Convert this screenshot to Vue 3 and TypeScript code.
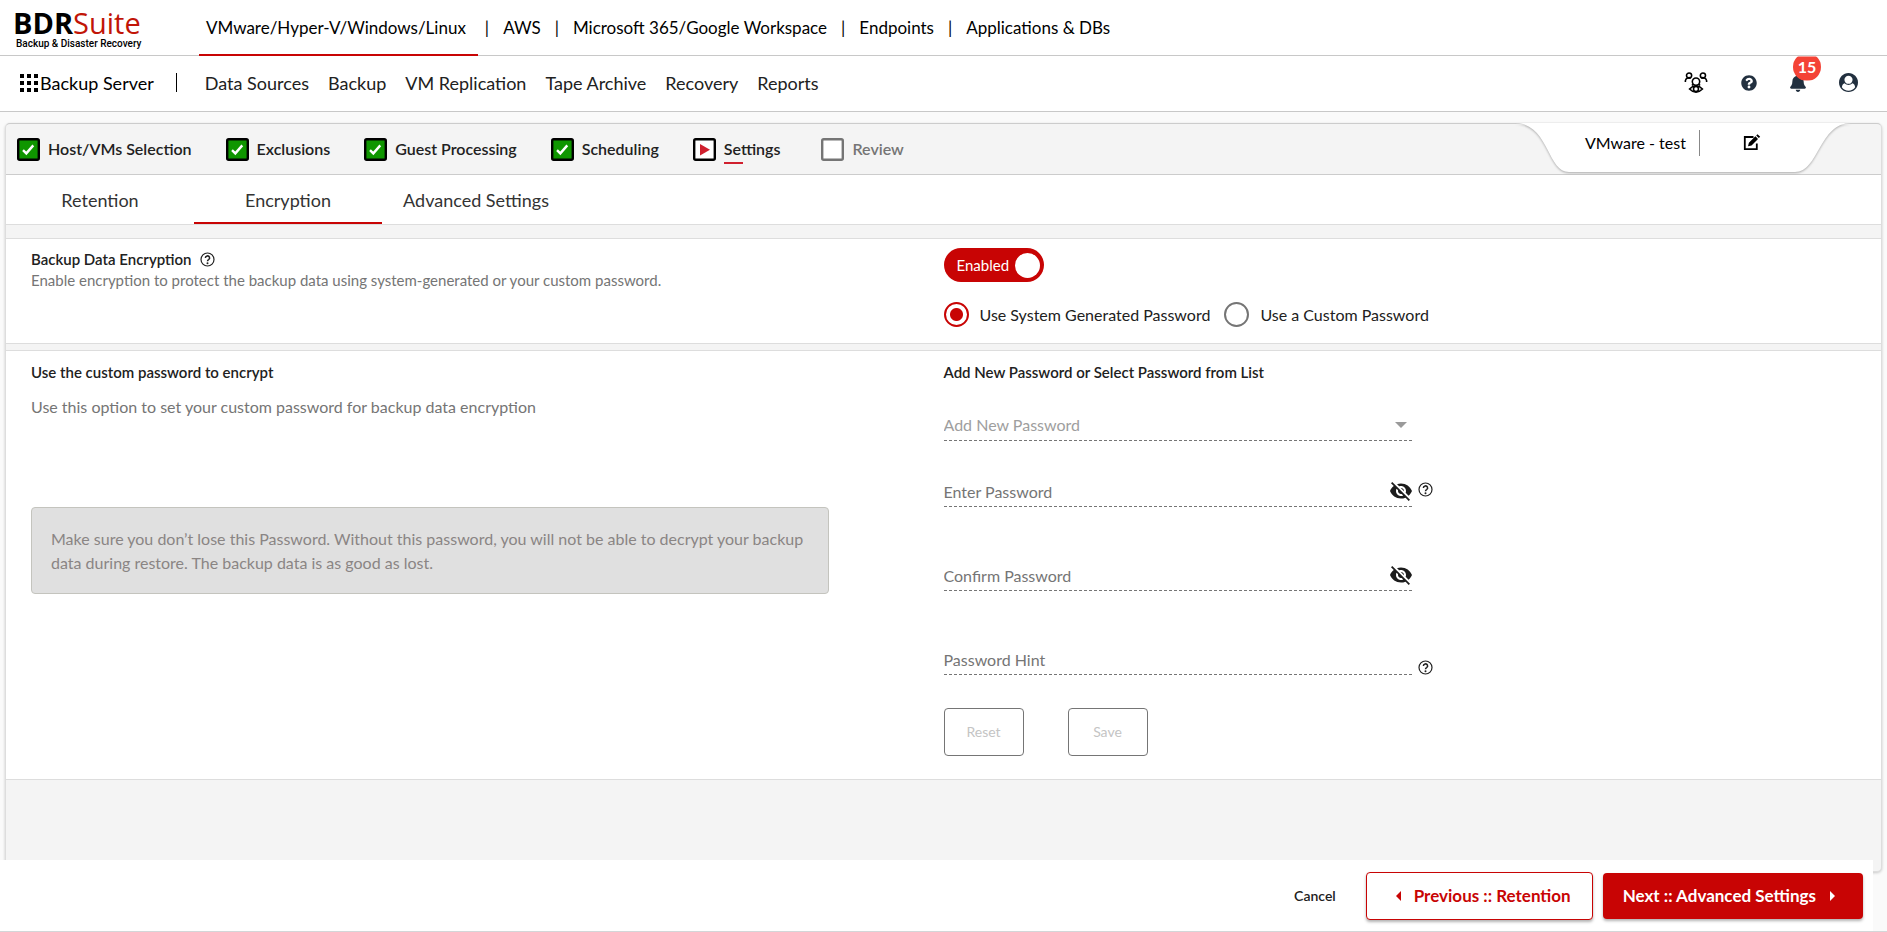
<script setup lang="ts">
import { ref } from 'vue'

interface Step {
  label: string
  state: 'done' | 'current' | 'todo'
}

const products: string[] = [
  'VMware/Hyper-V/Windows/Linux',
  'AWS',
  'Microsoft 365/Google Workspace',
  'Endpoints',
  'Applications & DBs',
]
const menu: string[] = ['Data Sources', 'Backup', 'VM Replication', 'Tape Archive', 'Recovery', 'Reports']
const steps: Step[] = [
  { label: 'Host/VMs Selection', state: 'done' },
  { label: 'Exclusions', state: 'done' },
  { label: 'Guest Processing', state: 'done' },
  { label: 'Scheduling', state: 'done' },
  { label: 'Settings', state: 'current' },
  { label: 'Review', state: 'todo' },
]
const tabs: string[] = ['Retention', 'Encryption', 'Advanced Settings']
const activeTab = ref('Encryption')
const enabled = ref(true)
const source = ref<'system' | 'custom'>('system')
</script>

<template>
  <div class="page">
    <header class="products">
      <a class="logo" href="#">
        <span class="logo-name">BDR<span class="logo-suite">Suite</span></span>
        <span class="logo-tag">Backup &amp; Disaster Recovery</span>
      </a>
      <nav class="product-nav" aria-label="Products">
        <template v-for="(product, i) in products" :key="product">
          <span v-if="i > 0" class="bar">|</span>
          <a href="#" class="product" :class="{ active: i === 0 }">{{ product }}</a>
        </template>
      </nav>
    </header>

    <div class="menubar">
      <a class="server" href="#">
        <svg width="18" height="18" viewBox="0 0 18 18" aria-hidden="true">
          <path d="M0 0h4v4H0zM7 0h4v4H7zM14 0h4v4h-4zM0 7h4v4H0zM7 7h4v4H7zM14 7h4v4h-4zM0 14h4v4H0zM7 14h4v4H7zM14 14h4v4h-4z" />
        </svg>
        Backup Server
      </a>
      <span class="divider"></span>
      <nav class="menu" aria-label="Main">
        <a v-for="item in menu" :key="item" href="#">{{ item }}</a>
      </nav>
      <div class="tools">
        <button type="button" class="tool" aria-label="Community">
          <svg width="24" height="24" viewBox="0 0 26 24" fill="none" stroke="#000" stroke-width="1.7">
            <circle cx="5.500" cy="4" r="2.800" />
            <circle cx="20.500" cy="4" r="2.800" />
            <path d="M1.500 11V9.500a4 4 0 0 1 6-2.700M24.500 11V9.500a4 4 0 0 0-6-2.700" />
            <circle cx="13" cy="10.500" r="4" />
            <path d="M8.500 14.500 10 13.500M17.500 14.500 16 13.500" />
            <path d="M6 18.500q7-7 14 0q-7 7-14 0z" />
            <circle cx="13" cy="18.500" r="2.700" />
          </svg>
        </button>
        <button type="button" class="tool" aria-label="Help">
          <svg width="16" height="16" viewBox="0 0 512 512" fill="#22303f">
            <path d="M504 256c0 137-111 248-248 248S8 393 8 256 119 8 256 8s248 111 248 248zM262.700 90c-54.500 0-89.300 23-116.500 63.800-3.500 5.300-2.400 12.400 2.700 16.300l34.700 26.300c5.200 3.900 12.600 3 16.700-2.100 17.900-22.700 30.100-35.800 57.300-35.800 20.400 0 45.700 13.100 45.700 33 0 15-12.400 22.700-32.500 34C247.100 238.500 216 255 216 296v4c0 6.600 5.400 12 12 12h56c6.600 0 12-5.400 12-12v-1.300c0-28.400 83.200-29.600 83.200-106.700 0-58-60.200-102-116.500-102zM256 338c-25.400 0-46 20.600-46 46s20.600 46 46 46 46-20.600 46-46-20.600-46-46-46z" />
          </svg>
        </button>
        <button type="button" class="tool" aria-label="Notifications, 15 new">
          <svg width="16" height="18" viewBox="0 0 448 512" fill="#22303f">
            <path d="M224 512c35.300 0 63.900-28.700 63.900-64H160.100c0 35.300 28.600 64 63.900 64zm215.400-149.700c-19.300-20.800-55.500-52-55.500-154.300 0-77.700-54.500-139.900-127.900-155.200V32c0-17.700-14.300-32-32-32s-32 14.300-32 32v20.800C118.600 68.100 64.100 130.300 64.100 208c0 102.300-36.200 133.500-55.500 154.300-6 6.400-8.700 14.100-8.600 21.700.1 16.400 13 32 32.100 32h383.800c19.100 0 32-15.600 32.100-32 .1-7.600-2.600-15.300-8.600-21.700z" />
          </svg>
          <span class="badge">15</span>
        </button>
        <button type="button" class="tool" aria-label="Account">
          <svg width="19" height="19" viewBox="0 0 1792 1792" fill="#22303f">
            <path d="M1523 1339q-22-155-87.500-257.500t-184.500-118.500q-67 74-159.500 115.500t-195.500 41.500-195.500-41.500-159.500-115.500q-119 16-184.500 118.500t-87.500 257.500q106 150 271 237.500t356 87.500 356-87.500 271-237.500zM1280 640q0-159-112.500-271.500t-271.500-112.500-271.500 112.500-112.500 271.500 112.500 271.500 271.500 112.500 271.500-112.500 112.500-271.500zM1792 896q0 182-71 347.500t-190.500 286-285.500 191.500-349 71q-182 0-348-71t-286-191-191-286-71-348 71-348 191-286 286-191 348-71 348 71 286 191 191 286 71 348z" />
          </svg>
        </button>
      </div>
    </div>

    <main class="card">
      <div class="wizard">
        <ol class="steps">
          <li v-for="step in steps" :key="step.label" class="step" :class="step.state">
            <svg width="23" height="23" viewBox="0 0 23 23" aria-hidden="true">
              <rect x="1.200" y="1.200" width="20.600" height="20.600" rx="1.500" stroke-width="2.400"
                :fill="step.state === 'done' ? '#0f9600' : '#fff'"
                :stroke="step.state === 'todo' ? '#757575' : '#000'" />
              <path v-if="step.state === 'done'" d="M6 12.200l3.300 3.200 7-8" fill="none" stroke="#fff" stroke-width="2.400" />
              <path v-if="step.state === 'current'" d="M7 6v11.500l10-5.700z" fill="#d0202e" />
            </svg>
            <span class="step-label">{{ step.label }}</span>
          </li>
        </ol>
        <div class="job">
          <svg class="job-shape" viewBox="0 0 336 52" preserveAspectRatio="none" aria-hidden="true">
            <path d="M0 0C34 0 32 49 54 49H280C304 49 304 0 336 0z" fill="#fff" />
          </svg>
          <span class="job-name">VMware - test</span>
          <button type="button" class="edit" aria-label="Edit job name">
            <svg width="18" height="18" viewBox="0 0 18 18">
              <path d="M10.500 3H1.800v12.200h12V9.500" fill="none" stroke="#000" stroke-width="1.800" />
              <path d="M5 12.300l.9-3.500 6.500-6.500 2.600 2.600-6.500 6.500zM13.200 1.500L14.500.2l2.700 2.600-1.400 1.300z" />
            </svg>
          </button>
        </div>
      </div>

      <div class="tabs" role="tablist">
        <button v-for="tab in tabs" :key="tab" type="button" role="tab" class="tab"
          :class="{ active: tab === activeTab }" :aria-selected="tab === activeTab" @click="activeTab = tab">
          {{ tab }}
        </button>
      </div>

      <section class="panel toggle-panel">
        <div class="col">
          <h2 class="title">
            Backup Data Encryption
            <svg class="help" width="15" height="15" viewBox="0 0 15 15" aria-hidden="true">
              <circle cx="7.500" cy="7.500" r="6.500" fill="none" stroke="#222" stroke-width="1.200" />
              <path d="M5.400 6a2.100 2 0 1 1 3.200 1.600Q7.500 8.200 7.500 9.200" fill="none" stroke="#222" stroke-width="1.500" />
              <circle cx="7.500" cy="11.200" r="1" fill="#222" />
            </svg>
          </h2>
          <p class="lead">Enable encryption to protect the backup data using system-generated or your custom password.</p>
        </div>
        <div class="col">
          <label class="toggle">
            Enabled
            <input v-model="enabled" type="checkbox" class="knob" />
          </label>
          <div class="choices">
            <label class="choice"><input v-model="source" type="radio" name="source" value="system" />Use System Generated Password</label>
            <label class="choice"><input v-model="source" type="radio" name="source" value="custom" />Use a Custom Password</label>
          </div>
        </div>
      </section>

      <section class="panel form-panel">
        <div class="col">
          <h2 class="title">Use the custom password to encrypt</h2>
          <p class="text">Use this option to set your custom password for backup data encryption</p>
          <p class="note">Make sure you don’t lose this Password. Without this password, you will not be able to decrypt your backup data during restore. The backup data is as good as lost.</p>
        </div>
        <form class="col" @submit.prevent>
          <h2 class="title">Add New Password or Select Password from List</h2>
          <div class="field first">
            <select class="control select" aria-label="Password list" disabled>
              <option>Add New Password</option>
            </select>
            <svg class="arrow" width="12" height="6" viewBox="0 0 12 6" aria-hidden="true"><path d="M0 0h12L6 6z" fill="#9a9a9a" /></svg>
          </div>
          <div v-for="(name, i) in ['Enter Password', 'Confirm Password', 'Password Hint']" :key="name" class="field" :class="{ entry: i === 0 }">
            <input class="control" :type="i === 2 ? 'text' : 'password'" :placeholder="name" :aria-label="name" />
            <button v-if="i < 2" type="button" class="eye" :aria-label="'Show ' + name">
              <svg width="24" height="24" viewBox="0 0 24 24" fill="#1c1c1c">
                <path d="M12 7c2.760 0 5 2.240 5 5 0 .650-.130 1.260-.360 1.830l2.920 2.920c1.510-1.260 2.700-2.890 3.430-4.750-1.730-4.390-6-7.500-11-7.500-1.400 0-2.740.250-3.980.700l2.160 2.160C10.740 7.130 11.350 7 12 7zM2 4.270l2.280 2.280.460.460C3.080 8.300 1.780 10.020 1 12c1.730 4.390 6 7.500 11 7.500 1.550 0 3.030-.300 4.380-.840l.420.420L19.730 22 21 20.730 3.270 3 2 4.270zM7.530 9.800l1.550 1.550c-.050.210-.080.430-.080.650 0 1.660 1.340 3 3 3 .220 0 .440-.030.650-.080l1.550 1.550c-.670.330-1.410.530-2.200.530-2.760 0-5-2.240-5-5 0-.790.200-1.530.530-2.200zm4.310-.780l3.150 3.150.020-.160c0-1.660-1.340-3-3-3l-.170.010z" />
              </svg>
            </button>
            <svg v-if="i !== 1" class="help field-help" :class="{ low: i === 2 }" width="15" height="15" viewBox="0 0 15 15" aria-hidden="true">
              <circle cx="7.500" cy="7.500" r="6.500" fill="none" stroke="#222" stroke-width="1.200" />
              <path d="M5.400 6a2.100 2 0 1 1 3.200 1.600Q7.500 8.200 7.500 9.200" fill="none" stroke="#222" stroke-width="1.500" />
              <circle cx="7.500" cy="11.200" r="1" fill="#222" />
            </svg>
          </div>
          <div class="actions">
            <button type="reset" class="small" disabled>Reset</button>
            <button type="submit" class="small" disabled>Save</button>
          </div>
        </form>
      </section>
    </main>

    <footer class="footer">
      <button type="button" class="cancel">Cancel</button>
      <button type="button" class="nav-btn previous">
        <svg width="5" height="10" viewBox="0 0 5 10" aria-hidden="true"><path d="M5 0v10L0 5z" fill="currentColor" /></svg>
        Previous :: Retention
      </button>
      <button type="button" class="nav-btn next">
        Next :: Advanced Settings
        <svg width="5" height="10" viewBox="0 0 5 10" aria-hidden="true"><path d="M0 0v10l5-5z" fill="currentColor" /></svg>
      </button>
    </footer>
  </div>
</template>

<style>
body {
  margin: 0;
}
</style>

<style scoped>
.page,
.page * {
  box-sizing: border-box;
}

.page {
  display: flex;
  flex-direction: column;
  min-height: 100vh;
  background: #fafafa;
  border-bottom: 1px solid #d4d6d8;
  font-family: Lato, "Liberation Sans", sans-serif;
  font-size: 16px;
  line-height: 24px;
  color: #212121;
}

a {
  color: inherit;
  text-decoration: none;
}

button {
  padding: 0;
  border: 0;
  background: none;
  font: inherit;
  color: inherit;
}

h2,
p,
ol {
  margin: 0;
  padding: 0;
}

svg {
  display: block;
  flex: none;
}

.products {
  display: flex;
  height: 56px;
  background: #fff;
  border-bottom: 1px solid #c8c8c8;
  font-size: 17px;
  color: #000;
}

.logo {
  width: 186px;
  margin-left: 13px;
  padding-top: 8px;
}

.logo-name,
.logo-tag {
  display: block;
}

.logo-name {
  font: 700 29px/30px "Open Sans", sans-serif;
}

.logo-suite {
  font-weight: 400;
  color: #c11507;
}

.logo-tag {
  padding-left: 3px;
  font: 500 10px/12px Roboto, sans-serif;
}

.product-nav {
  display: flex;
  gap: 7px;
  line-height: 56px;
}

.product {
  height: 56px;
  padding: 0 7px;
}

.product.active {
  padding-right: 12px;
  border-bottom: 2px solid #c80404;
}

.menubar {
  display: flex;
  align-items: center;
  height: 56px;
  padding: 0 29px 2px 20px;
  background: #fff;
  border-bottom: 1px solid #c8c8c8;
  font-size: 18px;
}

.server {
  display: flex;
  align-items: center;
  gap: 2px;
  color: #000;
}

.divider {
  width: 1px;
  height: 19px;
  margin: 0 28px 0 22px;
  background: #000;
}

.menu {
  display: flex;
  gap: 19px;
}

.tools {
  display: flex;
  align-items: center;
  gap: 33px;
  margin-left: auto;
}

.tool {
  position: relative;
}

.badge {
  position: absolute;
  left: 3px;
  top: -21px;
  width: 28px;
  height: 28px;
  border-radius: 50%;
  background: #f44336;
  clip-path: inset(4px 0 0 0);
  font-size: 16px;
  font-weight: 700;
  line-height: 28px;
  color: #fff;
}

.card {
  display: flex;
  flex: 1;
  flex-direction: column;
  margin: 11px 5px 0;
  background: #f4f4f4;
  border: 1px solid #ddd;
  border-top-color: #ccc;
  border-radius: 5px;
  box-shadow: 0 1px 3px rgba(0, 0, 0, 0.2);
}

.wizard {
  display: flex;
  justify-content: space-between;
  height: 51px;
  border-bottom: 1px solid #ccc;
}

.steps {
  display: flex;
  align-items: center;
  gap: 34px;
  padding-left: 11px;
  list-style: none;
}

.step {
  display: flex;
  align-items: center;
  gap: 8px;
  font-weight: 600;
}

.step-label {
  position: relative;
}

.current .step-label::after {
  position: absolute;
  left: 0;
  bottom: -3px;
  width: 19px;
  height: 2px;
  background: #d0202e;
  content: "";
}

.todo {
  margin-left: 7px;
  color: #757575;
}

.job {
  position: relative;
  display: flex;
  width: 336px;
  height: 52px;
  margin: -1px 30px 0 0;
  padding: 7px 0 0 70px;
  color: #000;
}

.job-shape {
  position: absolute;
  left: 0;
  top: 0;
  width: 100%;
  height: 100%;
  filter: drop-shadow(0 1px 1px rgba(0, 0, 0, 0.3));
}

.job-name {
  position: relative;
  height: 26px;
  padding-right: 13px;
  border-right: 1px solid #888;
  line-height: 26px;
}

.edit {
  position: relative;
  height: 26px;
  margin-left: 43px;
}

.tabs {
  display: flex;
  height: 50px;
  background: #fff;
  border-bottom: 1px solid #ddd;
}

.tab {
  width: 188px;
  padding-top: 2px;
  border-bottom: 2px solid transparent;
  font-size: 18px;
  color: #333;
}

.tab.active {
  border-bottom-color: #c80404;
}

.panel {
  display: flex;
  background: #fff;
  border: solid #ddd;
  border-width: 1px 0;
}

.col {
  width: 50%;
}

.toggle-panel {
  min-height: 106px;
  margin-top: 13px;
  padding-top: 9px;
}

.form-panel {
  min-height: 430px;
  margin-top: 6px;
  padding-top: 10px;
}

.panel > .col:first-child {
  padding-left: 25px;
}

.title {
  display: flex;
  align-items: center;
  gap: 8px;
  font-size: 15px;
  font-weight: 600;
  line-height: 22px;
}

.lead {
  font-size: 15px;
  line-height: 20px;
  color: #757575;
}

.text {
  padding-top: 12px;
  color: #757575;
}

.toggle {
  display: flex;
  align-items: center;
  justify-content: space-between;
  width: 100px;
  height: 34px;
  padding: 0 4px 0 13px;
  border-radius: 17px;
  background: #c80404;
  font-size: 15px;
  color: #fff;
}

.knob {
  width: 25px;
  height: 25px;
  margin: 0;
  appearance: none;
  border-radius: 50%;
  background: #fff;
}

.choices {
  display: flex;
  gap: 14px;
  padding-top: 20px;
}

.choice {
  display: flex;
  align-items: center;
  gap: 11px;
}

.choice input {
  width: 25px;
  height: 25px;
  margin: 0;
  appearance: none;
  border: 2px solid #757575;
  border-radius: 50%;
}

.choice input:checked {
  border-color: #c80404;
  background: radial-gradient(circle, #c80404 6px, #fff 7px);
}

.note {
  width: 798px;
  max-width: 100%;
  margin-top: 88px;
  padding: 19px 19px 18px;
  border: 1px solid #c4c4be;
  border-radius: 4px;
  background: #e0e0e0;
  color: #8a8584;
}

.field {
  position: relative;
  width: 50%;
  margin-top: 52px;
}

.field.first {
  margin-top: 26px;
}

.field.entry {
  margin-top: 34px;
}

.control {
  display: block;
  width: 100%;
  height: 32px;
  padding: 2px 30px 0 0;
  border: 0;
  border-bottom: 1px dashed #757575;
  border-radius: 0;
  outline: 0;
  appearance: none;
  background: none;
  font: inherit;
  color: #333;
}

.select {
  padding-top: 0;
  color: #9e9e9e;
  opacity: 1;
}

.control::placeholder {
  color: #757575;
  opacity: 1;
}

.arrow {
  position: absolute;
  right: 5px;
  top: 13px;
}

.eye {
  position: absolute;
  right: -1px;
  top: 4px;
}

.field-help {
  position: absolute;
  left: calc(100% + 6px);
  top: 7px;
}

.field-help.low {
  top: 17px;
}

.actions {
  display: flex;
  gap: 44px;
  padding: 33px 0 22px;
}

.small {
  width: 80px;
  height: 48px;
  border: 1px solid #757575;
  border-radius: 4px;
  font-size: 14px;
  color: #c4c4c4;
}

.footer {
  position: relative;
  display: flex;
  align-items: center;
  justify-content: flex-end;
  height: 71px;
  margin: -12px 14px 0 0;
  padding-right: 10px;
  background: #fff;
}

.cancel {
  margin-right: 30px;
  font-size: 14px;
  font-weight: 600;
}

.nav-btn {
  display: flex;
  align-items: center;
  border-radius: 4px;
  box-shadow: 0 2px 3px rgba(0, 0, 0, 0.3);
  font-size: 17px;
  font-weight: 700;
}

.previous {
  gap: 13px;
  height: 48px;
  padding: 0 21px 0 29px;
  border: 1px solid #c80404;
  color: #c80404;
  background: #fff;
}

.next {
  gap: 14px;
  height: 46px;
  margin-left: 10px;
  padding: 0 28px 0 20px;
  background: #c80404;
  color: #fff;
}
</style>
